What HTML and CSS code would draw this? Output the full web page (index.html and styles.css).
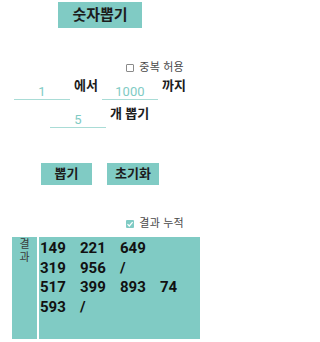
FILE: index.html
```html
<!DOCTYPE html>
<html lang="ko">
<head>
<meta charset="utf-8">
<link rel="stylesheet" href="styles.css">
</head>
<body>
<div class="app">
  <div class="title-row"><div class="title">숫자뽑기</div></div>

  <div class="opt-row opt-top">
    <span class="cb"></span><span class="opt-label">중복 허용</span>
  </div>

  <div class="range-row">
    <div class="field">1</div>
    <div class="lbl">에서</div>
    <div class="field">1000</div>
    <div class="lbl">까지</div>
  </div>

  <div class="count-row">
    <div class="field">5</div>
    <div class="lbl">개 뽑기</div>
  </div>

  <div class="btn-row">
    <div class="btn btn-pick">뽑기</div>
    <div class="btn btn-reset">초기화</div>
  </div>

  <div class="opt-row opt-bottom">
    <span class="cb cb-on"><svg viewBox="0 0 8 8" width="8" height="8"><path d="M1.5 4.2 L3.3 6 L6.6 2.2" fill="none" stroke="#fff" stroke-width="1.2"/></svg></span><span class="opt-label">결과 누적</span>
  </div>

  <div class="result">
    <div class="result-label"><div class="ch">결</div><div class="ch">과</div></div>
    <div class="result-body">
      <div class="line"><span>149</span><span>221</span><span>649</span></div>
      <div class="line"><span>319</span><span>956</span><span>/</span></div>
      <div class="line"><span>517</span><span>399</span><span>893</span><span>74</span></div>
      <div class="line"><span>593</span><span>/</span></div>
    </div>
  </div>
</div>
</body>
</html>
```
FILE: styles.css
```css
html, body {
  margin: 0;
  padding: 0;
  background: #ffffff;
}
body {
  font-family: Roboto, "Noto Sans CJK KR", sans-serif;
  color: #1a1a1a;
  width: 200px;
  height: 342px;
  overflow: hidden;
}
.app {
  display: flex;
  flex-direction: column;
}
.title-row {
  display: flex;
  justify-content: center;
  padding-top: 2px;
}
.title {
  width: 84px;
  height: 26px;
  background: #80cbc4;
  font-weight: 700;
  font-size: 15px;
  line-height: 26px;
  text-align: center;
  color: #1c1c1c;
}
.opt-row {
  display: flex;
  align-items: center;
  justify-content: flex-end;
  padding-right: 16px;
  height: 12px;
}
.opt-top {
  margin-top: 34px;
}
.cb {
  width: 6px;
  height: 6px;
  border: 1px solid #8a8a8a;
  border-radius: 1px;
  margin-right: 5px;
  display: flex;
  align-items: center;
  justify-content: center;
}
.cb-on {
  width: 8px;
  height: 8px;
  border: none;
  background: #80cbc4;
}
.cb-on svg { display: block; }
.opt-label {
  font-size: 11px;
  color: #4a4a4a;
  line-height: 12px;
  letter-spacing: 0.3px;
}
.range-row, .count-row {
  display: flex;
  align-items: flex-start;
  gap: 4px;
}
.range-row {
  margin-top: 4px;
  padding-left: 14px;
}
.count-row {
  margin-top: 6px;
  padding-left: 50px;
}
.field {
  width: 56px;
  height: 22px;
  box-sizing: border-box;
  border-bottom: 1.5px solid #a9dcd6;
  text-align: center;
  font-size: 13px;
  line-height: 14px;
  padding-top: 7px;
  color: #80cbc4;
}
.lbl {
  font-size: 13px;
  font-weight: 700;
  line-height: 16px;
  color: #1c1c1c;
}
.btn-row {
  display: flex;
  gap: 15px;
  padding-left: 41px;
  margin-top: 35px;
}
.btn {
  height: 22px;
  background: #80cbc4;
  font-size: 13px;
  font-weight: 700;
  line-height: 22px;
  text-align: center;
  color: #1c1c1c;
}
.btn-pick { width: 51px; }
.btn-reset { width: 52px; }
.opt-bottom {
  margin-top: 33px;
}
.result {
  display: flex;
  gap: 2px;
  margin: 7px 12px 0 12px;
  height: 102px;
}
.result-label {
  width: 25px;
  flex: 0 0 25px;
  background: #80cbc4;
  padding-top: 1px;
  font-size: 11px;
  line-height: 13px;
  color: #3a3a3a;
}
.ch {
  display: block;
  text-align: center;
}
.result-body {
  flex: 1;
  background: #80cbc4;
  padding: 2px 0 0 1px;
}
.line {
  display: flex;
  font-size: 15px;
  font-weight: 700;
  line-height: 19.5px;
  color: #111;
}
.line span {
  width: 40px;
}
```
